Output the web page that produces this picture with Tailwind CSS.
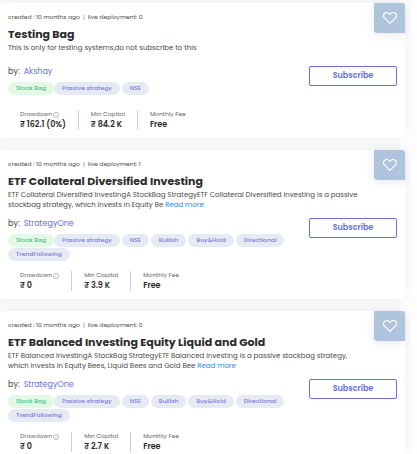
<!DOCTYPE html>
<html lang="en">
<head>
  <meta charset="UTF-8" />
  <meta name="viewport" content="width=device-width, initial-scale=1.0" />
  <title>Stock Bags</title>
  <script src="https://cdn.jsdelivr.net/npm/@tailwindcss/browser@4"></script>
</head>
<body class="bg-[#fdfdfe] text-[#4a4a4a] font-['Poppins','Inter',sans-serif]">
  <main id="bags" class="mr-[17px] flex flex-col gap-3 bg-[#fafafa] pt-[3px] pb-3"></main>

  <script>
    const bags = [
      {
        name: 'Testing Bag',
        deployments: 0,
        text: 'This is only for testing systems,do not subscribe to this',
        more: false,
        author: 'Akshay',
        tags: ['Passive strategy', 'NSE'],
        drawdown: '₹ 162.1 (0%)',
        capital: '₹ 84.2 K'
      },
      {
        name: 'ETF Collateral Diversified Investing',
        deployments: 1,
        text: 'ETF Collateral Diversified InvestingA StockBag StrategyETF Collateral Diversified Investing is a passive stockbag strategy, which invests in Equity Be',
        more: true,
        author: 'StrategyOne',
        tags: ['Passive strategy', 'NSE', 'Bullish', 'Buy&amp;Hold', 'Directional', 'TrendFollowing'],
        drawdown: '₹ 0',
        capital: '₹ 3.9 K'
      },
      {
        name: 'ETF Balanced Investing Equity Liquid and Gold',
        deployments: 0,
        text: 'ETF Balanced InvestingA StockBag StrategyETF Balanced Investing is a passive stockbag strategy, which invests in Equity Bees, Liquid Bees and Gold Bee',
        more: true,
        author: 'StrategyOne',
        tags: ['Passive strategy', 'NSE', 'Bullish', 'Buy&amp;Hold', 'Directional', 'TrendFollowing'],
        drawdown: '₹ 0',
        capital: '₹ 2.7 K'
      }
    ];

    const infoIcon = `
      <svg class="size-[6px]" viewBox="0 0 12 12" fill="none" stroke="#888" stroke-width="1">
        <circle cx="6" cy="6" r="5.3" />
        <path d="M6 5v4M6 2.8v1.2" />
      </svg>`;

    document.getElementById('bags').innerHTML = bags.map(bag => `
      <article class="relative -mr-[5px] rounded-[3px] bg-white px-2 py-2 shadow-[0_0_12px_rgba(60,70,120,0.06)]">
        <button aria-label="Add to favourites" class="absolute top-0 right-0 flex h-[30px] w-[31px] items-center justify-center rounded-tr-[3px] rounded-bl-[3px] bg-[#b0c4de] pb-px shadow-[0_2px_8px_rgba(60,70,120,0.12)]">
          <svg class="h-3 w-[14px]" viewBox="0 0 14 12" fill="none" stroke="#fff" stroke-width="1.1" stroke-linejoin="round">
            <path d="M7 11.3 1.7 6.2C.3 4.8.3 2.7 1.5 1.5 2.9.2 5 .3 6.2 1.6L7 2.5l.8-.9C9 .3 11.1.2 12.5 1.5c1.2 1.2 1.2 3.3-.2 4.7z" />
          </svg>
        </button>

        <p class="flex gap-[3px] text-[6px] leading-3">
          <span>created : 10 months ago</span>
          <span class="text-[#6a6fd8]">|</span>
          <span>live deployment: ${bag.deployments}</span>
        </p>
        <h2 class="mt-[3px] text-[11px] leading-4 font-bold text-[#2b2b2b]">${bag.name}</h2>
        <p class="mt-[1px] mr-9 min-h-[15px] text-[7px] leading-[10px]">${bag.text}
          ${bag.more ? '<a href="#" class="text-[#1e88f5]">Read more</a>' : ''}
        </p>

        <div class="mt-2 flex min-h-[34px] items-start justify-between gap-3">
          <div>
            <p class="flex gap-1 text-[8px] leading-3"><span>by:</span><a href="#" class="text-[#6a70e0]">${bag.author}</a></p>
            <ul class="mt-1 flex flex-wrap gap-x-[2px] gap-y-[1px] text-[6px] leading-[13px] font-medium">
              <li class="-mr-[2px] rounded-full bg-[#e4f8e6] px-2 text-[#3ec48e]">Stock Bag</li>
              ${bag.tags.map(tag => `<li class="rounded-full bg-[#e6ebf3] px-2 text-[#7b78e6]">${tag}</li>`).join('')}
            </ul>
          </div>
          <button class="h-5 w-[88px] shrink-0 rounded-[2px] border border-[#6672e6] text-[8px] leading-none font-semibold text-[#6470e4]">Subscribe</button>
        </div>

        <dl class="mt-[10px] flex h-5 text-[8px] leading-[12px] font-semibold text-[#2b2b2b]">
          <div class="px-3">
            <dt class="flex items-center gap-px text-[6px] leading-[9px] font-normal text-[#666]">Drawdown ${infoIcon}</dt>
            <dd>${bag.drawdown}</dd>
          </div>
          <div class="border-l border-[#ccc] px-3">
            <dt class="text-[6px] leading-[9px] font-normal text-[#666]">Min Capital</dt>
            <dd>${bag.capital}</dd>
          </div>
          <div class="border-l border-[#ccc] px-3">
            <dt class="text-[6px] leading-[9px] font-normal text-[#666]">Monthly Fee</dt>
            <dd>Free</dd>
          </div>
        </dl>
      </article>
    `).join('');
  </script>
</body>
</html>
